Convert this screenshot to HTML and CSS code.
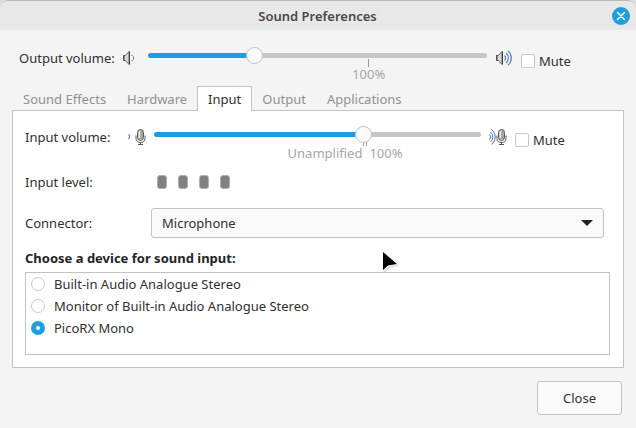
FILE: index.html
```html
<!DOCTYPE html>
<html lang="en">
<head>
<meta charset="utf-8">
<meta name="viewport" content="width=device-width, initial-scale=1">
<title>Sound Preferences</title>
<link rel="stylesheet" href="styles.css">
</head>
<body>
<main class="window">
  <header class="titlebar">
    <h1 class="title">Sound Preferences</h1>
    <button class="window-close" type="button" aria-label="Close window">
      <svg width="18" height="18" viewBox="0 0 18 18"><path d="M5.5 5.5l7 7M12.5 5.5l-7 7" stroke="#fff" stroke-width="1.5" stroke-linecap="round"/></svg>
    </button>
  </header>

  <section class="volume output">
    <label class="volume-label" for="output-volume">Output volume:</label>
    <svg class="icon" width="16" height="16" viewBox="0 0 16 16" aria-hidden="true">
      <path d="M3.500 5.500h2L9 1.500v13L5.500 10.500h-2z" fill="#d9dbd4" stroke="#666963"/>
      <path d="M4 5v6" stroke="#3c3f3a"/><path d="M9.500 1.500v13" stroke="#3c3f3a"/>
      <path d="M11.500 5.500h1l1 1v3l-1 1h-1" fill="none" stroke="#6587c0"/>
    </svg>
    <div class="slider-box">
      <input class="slider" id="output-volume" type="range" min="0" max="151" value="46" style="--fill:31%">
      <div class="scale"><span class="tick"></span><span class="mark">100%</span></div>
    </div>
    <svg class="icon" width="18" height="16" viewBox="0 0 18 16" aria-hidden="true">
      <path d="M1.500 5.500h2L7 1.500v13L3.500 10.500h-2z" fill="#d9dbd4" stroke="#666963"/>
      <path d="M2 5v6" stroke="#3c3f3a"/><path d="M7.500 1.500v13" stroke="#3c3f3a"/>
      <path d="M9.500 5.500a3.500 3.500 0 0 1 0 5M11 3a6.500 6.500 0 0 1 0 10M13 .8a9.500 9.500 0 0 1 0 14.400" fill="none" stroke="#4d73b0" stroke-width="1.100"/>
    </svg>
    <label class="mute"><input class="check" type="checkbox"> Mute</label>
  </section>

  <nav class="tabs" role="tablist">
    <button class="tab" type="button" role="tab">Sound Effects</button>
    <button class="tab" type="button" role="tab">Hardware</button>
    <button class="tab active" type="button" role="tab" aria-selected="true">Input</button>
    <button class="tab" type="button" role="tab">Output</button>
    <button class="tab" type="button" role="tab">Applications</button>
  </nav>

  <section class="panel" role="tabpanel">
    <div class="volume input">
      <label class="volume-label" for="input-volume">Input volume:</label>
      <svg class="icon" width="18" height="18" viewBox="0 0 18 18" aria-hidden="true">
        <path d="M.5 6.500a3 3 0 0 1 0 4.500" fill="none" stroke="#4d73b0" stroke-width="1.100"/>
        <rect x="9.500" y="1.500" width="6" height="11" rx="3" fill="#c4c6c1" stroke="#555753"/>
        <path d="M11 4h4M11 6h4M11 8h4M11 10h4" stroke="#777" stroke-width=".8"/><path d="M11.500 3v7" stroke="#eee"/>
        <path d="M8 7.500v3q0 4 4.500 4t4.500-4v-3M12.500 14v2M10 16.500h5" fill="none" stroke="#555753"/>
      </svg>
      <div class="slider-box">
        <input class="slider" id="input-volume" type="range" min="0" max="154" value="100" style="--fill:65%">
        <div class="scale"><span class="tick double"></span><span class="mark"><span>Unamplified</span><span>100%</span></span></div>
      </div>
      <svg class="icon" width="18" height="18" viewBox="0 0 18 18" aria-hidden="true">
        <path d="M.5 6.500a3.500 3.500 0 0 1 0 5M1.500 4a6.500 6.500 0 0 1 0 10M2.500 1.500a9.500 9.500 0 0 1 0 15" fill="none" stroke="#4d73b0"/>
        <rect x="9.500" y="1.500" width="6" height="11" rx="3" fill="#c4c6c1" stroke="#555753"/>
        <path d="M11 4h4M11 6h4M11 8h4M11 10h4" stroke="#777" stroke-width=".8"/><path d="M11.500 3v7" stroke="#eee"/>
        <path d="M8 7.500v3q0 4 4.500 4t4.500-4v-3M12.500 14v2M10 16.500h5" fill="none" stroke="#555753"/>
      </svg>
      <label class="mute"><input class="check" type="checkbox"> Mute</label>
    </div>

    <div class="field">
      <span class="field-label">Input level:</span>
      <div class="level" role="img" aria-label="Input level"><i></i><i></i><i></i><i></i></div>
    </div>

    <div class="field connector">
      <label class="field-label" for="connector">Connector:</label>
      <div class="select-box">
        <select class="select" id="connector"><option>Microphone</option></select>
        <svg class="arrow" width="12" height="6" viewBox="0 0 12 6" aria-hidden="true"><path d="M0 0h12L6 6z" fill="#222"/></svg>
      </div>
    </div>

    <h2 class="heading">Choose a device for sound input:</h2>
    <div class="devices">
      <label class="device"><input class="radio" type="radio" name="device"> Built-in Audio Analogue Stereo</label>
      <label class="device"><input class="radio" type="radio" name="device"> Monitor of Built-in Audio Analogue Stereo</label>
      <label class="device"><input class="radio" type="radio" name="device" checked> PicoRX Mono</label>
    </div>
  </section>

  <footer class="actions"><button class="button" type="button">Close</button></footer>

  <svg class="pointer" width="20" height="26" viewBox="0 0 20 26" aria-hidden="true">
    <path d="M2.500 3v17.500l5-4 8-2z" fill="#ccc" stroke="#ddd" stroke-width="3" stroke-linejoin="round"/>
    <path d="M1 2v18l5-4.500 9-1.500z" fill="#000" stroke="#fff" stroke-width="2" stroke-linejoin="round"/>
    <path d="M1 2v18l5-4.500 9-1.500z" fill="#000"/>
  </svg>
</main>
</body>
</html>
```
FILE: styles.css
```css
* { box-sizing: border-box; }

body {
  margin: 0;
  background: #dcdcdc;
  color: #303030;
  font: 13px/22px "Noto Sans", sans-serif;
}

button, select, input { margin: 0; font: inherit; color: inherit; }

.window {
  position: relative;
  min-height: 100vh;
  overflow: hidden;
  background: #f4f4f4;
  border-radius: 8px 8px 0 0;
}

.titlebar {
  display: grid;
  grid-template-columns: 24px 1fr 24px;
  align-items: center;
  height: 30px;
  padding: 0 6px 0 5px;
  background: #e8e8e8;
  border-top: 1px solid #b8b8b8;
  border-radius: 8px 8px 0 0;
}

.title {
  grid-column: 2;
  margin: 0;
  text-align: center;
  font-size: 13px;
  font-weight: 600;
  line-height: 20px;
  color: #484848;
}

.window-close {
  justify-self: end;
  display: grid;
  width: 18px;
  height: 18px;
  padding: 0;
  border: 0;
  border-radius: 50%;
  background: #1f9ede;
}

.volume { display: flex; align-items: flex-start; }
.volume-label { flex: none; }
.icon { flex: none; height: 22px; }
.slider-box { flex: 1; }

.output { height: 56px; padding: 17px 0 0 19px; }
.output .volume-label { width: 101px; }
.output .slider-box { margin: 0 8px 0 12px; }
.output .mute { width: 115px; margin-left: 8px; }

.input { height: 45px; }
.input .volume-label { width: 103px; }
.input .slider-box { margin: 0 8px; }
.input .mute { width: 95px; margin-left: 8px; }

.slider {
  position: relative;
  z-index: 1;
  display: block;
  width: 100%;
  height: 17px;
  appearance: none;
  background: transparent;
}

.slider::-webkit-slider-runnable-track {
  height: 5px;
  border-radius: 3px;
  background: linear-gradient(to right, #1f9ede var(--fill), #c6c6c6 var(--fill));
}

.slider::-webkit-slider-thumb {
  appearance: none;
  width: 17px;
  height: 17px;
  margin-top: -6px;
  border: 1px solid #c0c0c0;
  border-radius: 50%;
  background: #fafafa;
}

.scale { margin-top: -5px; color: #a6a6a6; line-height: 14px; }
.tick { display: block; width: 1px; height: 8px; margin-left: 65%; background: #999; }
.tick.double { width: 4px; margin-left: 64%; border: solid #999; border-width: 0 1px; background: none; }
.mark { display: flex; gap: 7px; justify-content: flex-end; padding-right: 30%; }
.input .mark { padding-right: 24%; }

.mute { display: flex; align-items: center; gap: 4px; height: 28px; }

.check, .radio {
  flex: none;
  width: 14px;
  height: 14px;
  appearance: none;
  border: 1px solid #c8c8c8;
  border-radius: 2px;
  background: #fff;
}

.radio { border-radius: 50%; }
.radio:checked { border: 5px solid #1f9ede; }

.tabs { display: flex; height: 25px; margin: 0 12px -1px; position: relative; }

.tab {
  height: 25px;
  padding: 0 10px;
  border: 1px solid transparent;
  border-bottom: 0;
  background: none;
  color: #919191;
}

.tab + .tab { margin-left: -1px; }
.tab.active { background: #fff; border-color: #c2c2c2; color: #303030; }

.panel {
  margin: 0 12px;
  padding: 15px 13px 12px 12px;
  border: 1px solid #c2c2c2;
  background: #fff;
}

.field { display: flex; align-items: center; }
.field-label { flex: none; width: 126px; }
.level { display: flex; gap: 11px; padding-left: 6px; }
.level i { width: 10px; height: 14px; border: 1px solid #b0b0b0; border-radius: 3px; background: #808080; }
.connector { margin: 15px 6px 9px 0; }
.select-box { position: relative; flex: 1; }

.select {
  display: block;
  width: 100%;
  height: 30px;
  padding: 0 30px 0 10px;
  appearance: none;
  border: 1px solid #c2c2c2;
  border-radius: 3px;
  background: #fafafa;
}

.arrow { position: absolute; right: 11px; top: 12px; }
.heading { margin: 0 0 3px; font-size: 13px; font-weight: 700; line-height: 22px; color: #242424; }
.devices { min-height: 83px; padding: 0 5px; border: 1px solid #c2c2c2; }
.device { display: flex; align-items: center; gap: 9px; height: 22px; }

.actions { display: flex; justify-content: flex-end; padding: 13px 14px; }

.button {
  width: 85px;
  height: 34px;
  border: 1px solid #c2c2c2;
  border-radius: 3px;
  background: #fafafa;
}

.pointer { position: absolute; left: 60%; top: 250px; }
```
